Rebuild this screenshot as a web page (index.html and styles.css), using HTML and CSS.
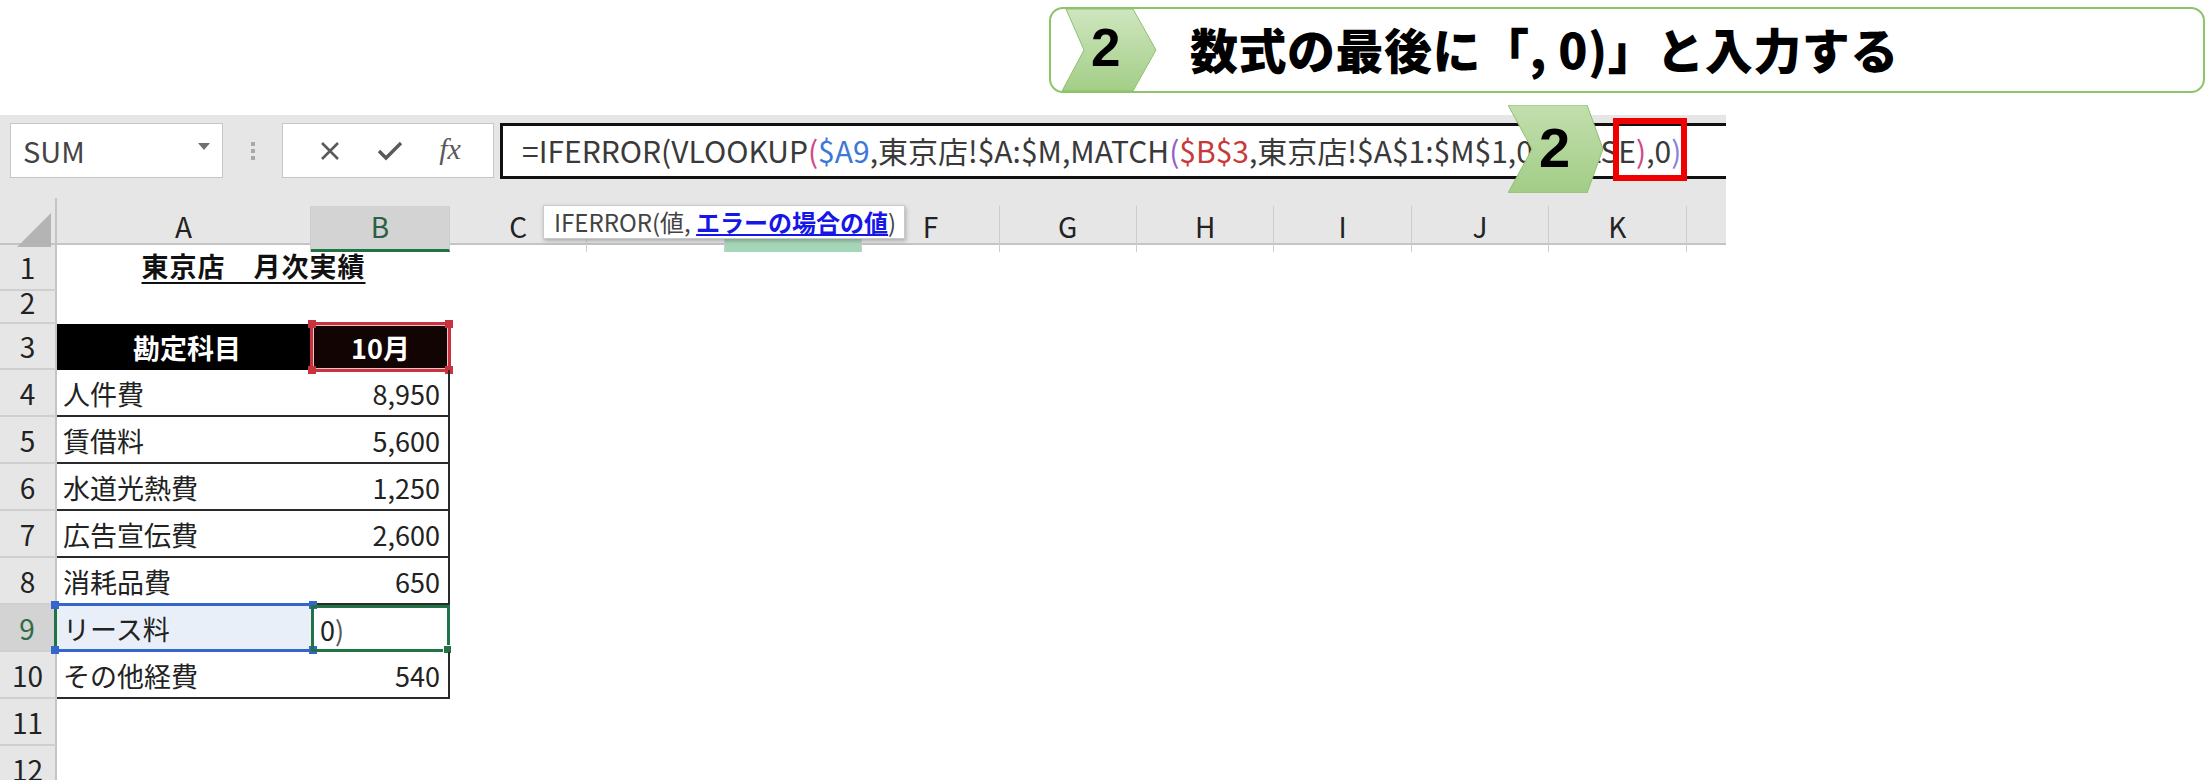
FILE: index.html
```html
<!DOCTYPE html>
<html lang="ja">
<head>
  <meta charset="UTF-8">
  <link rel="stylesheet" href="styles.css">
  <title>IFERROR 数式の入力</title>
</head>
<body>
  <div class="top">
    <div class="banner">
      <div class="step">
        <svg class="step-shape" width="96" height="82" viewBox="0 0 96 82">
          <defs>
            <linearGradient id="g1" x1="0" y1="0" x2="0" y2="1">
              <stop offset="0" stop-color="#cfe6bf"/>
              <stop offset="1" stop-color="#a3ce87"/>
            </linearGradient>
          </defs>
          <polygon points="4,0 71,0 94,41 71,82 0,82 22,41" fill="url(#g1)" stroke="#8fc06e" stroke-width="1"/>
        </svg>
        <span class="step-num">2</span>
      </div>
      <div class="banner-text">数式の最後に「, 0)」と入力する</div>
    </div>
  </div>

  <div class="excel">
    <div class="fbar">
      <div class="namebox">
        <span>SUM</span>
        <svg width="12" height="8" viewBox="0 0 12 8"><polygon points="0,0 12,0 6,7" fill="#707070"/></svg>
      </div>
      <div class="grip"><i></i><i></i><i></i></div>
      <div class="btns">
        <svg width="22" height="22" viewBox="0 0 22 22"><path d="M3 3 L19 19 M19 3 L3 19" stroke="#5a5a5a" stroke-width="2.6" fill="none"/></svg>
        <svg width="26" height="22" viewBox="0 0 26 22"><path d="M2 11 L9 18 L24 3" stroke="#5a5a5a" stroke-width="3.4" fill="none"/></svg>
        <span class="fx">fx</span>
      </div>
      <div class="formula">
        <span class="f-text">=IFERROR(VLOOKUP<b class="c-pink">(</b><b class="c-blue">$A9</b>,東京店!$A:$M,MATCH<b class="c-purple">(</b><b class="c-red">$B$3</b>,東京店!$A$1:$M$1,0<b class="c-purple">)</b>,FALSE<b class="c-pink">)</b>,0<b class="c-lav">)</b></span>
        <div class="chev">
          <svg width="96" height="88" viewBox="0 0 96 88">
            <defs>
              <linearGradient id="g2" x1="0" y1="0" x2="0" y2="1">
                <stop offset="0" stop-color="#c2dfae"/>
                <stop offset="1" stop-color="#a2cd86"/>
              </linearGradient>
            </defs>
            <polygon points="0,0 79,0 95,44 79,88 0,88 24,44" fill="url(#g2)" stroke="#90bf70" stroke-width="1"/>
          </svg>
          <span>2</span>
        </div>
        <div class="redbox"></div>
      </div>
    </div>

    <div class="colheads">
      <div class="corner"><i></i></div>
      <div class="ch col-a">A</div>
      <div class="ch col-b sel">B</div>
      <div class="ch">C</div>
      <div class="ch">D</div>
      <div class="ch ref">E</div>
      <div class="ch">F</div>
      <div class="ch">G</div>
      <div class="ch">H</div>
      <div class="ch">I</div>
      <div class="ch">J</div>
      <div class="ch">K</div>
      <div class="ch last"></div>
      <div class="tip">IFERROR(値, <u>エラーの場合の値</u>)</div>
    </div>

    <div class="sheet">
      <div class="row r1">
        <div class="rh">1</div>
        <div class="title"><span>東京店　月次実績</span></div>
      </div>
      <div class="row r2">
        <div class="rh">2</div>
      </div>
      <div class="row r3">
        <div class="rh">3</div>
        <div class="cell a head">勘定科目</div>
        <div class="cell b head dark">10月
          <div class="refbox red"><i class="k tl"></i><i class="k tr"></i><i class="k bl"></i><i class="k br"></i></div>
        </div>
      </div>
      <div class="row tr">
        <div class="rh">4</div>
        <div class="cell a">人件費</div>
        <div class="cell b num">8,950</div>
      </div>
      <div class="row tr">
        <div class="rh">5</div>
        <div class="cell a">賃借料</div>
        <div class="cell b num">5,600</div>
      </div>
      <div class="row tr">
        <div class="rh">6</div>
        <div class="cell a">水道光熱費</div>
        <div class="cell b num">1,250</div>
      </div>
      <div class="row tr">
        <div class="rh">7</div>
        <div class="cell a">広告宣伝費</div>
        <div class="cell b num">2,600</div>
      </div>
      <div class="row tr">
        <div class="rh">8</div>
        <div class="cell a">消耗品費</div>
        <div class="cell b num">650</div>
      </div>
      <div class="row tr">
        <div class="rh sel">9</div>
        <div class="cell a picked">リース料
          <div class="refbox blue"><i class="k tl"></i><i class="k tr"></i><i class="k bl"></i><i class="k br"></i></div>
        </div>
        <div class="cell b active">0<span class="paren">)</span>
          <i class="handle"></i>
        </div>
      </div>
      <div class="row tr">
        <div class="rh">10</div>
        <div class="cell a">その他経費</div>
        <div class="cell b num">540</div>
      </div>
      <div class="row">
        <div class="rh">11</div>
      </div>
      <div class="row">
        <div class="rh">12</div>
      </div>
    </div>
  </div>
</body>
</html>
```

FILE: styles.css
```css
body {
  margin: 0;
  width: 2209px;
  height: 780px;
  overflow: hidden;
  background: #fff;
  font-family: "Noto Sans CJK JP", "Noto Sans", sans-serif;
}

/* step banner */
.top {
  height: 115px;
  display: flex;
  justify-content: flex-end;
  align-items: flex-start;
  padding: 7px 4px 0 0;
  box-sizing: border-box;
}
.banner {
  width: 1156px;
  height: 86px;
  box-sizing: border-box;
  border: 2px solid #8cc46a;
  border-radius: 14px;
  display: flex;
  align-items: center;
  padding-left: 11px;
}
.step {
  position: relative;
  width: 96px;
  height: 82px;
}
.step-shape {
  display: block;
}
.step-num {
  position: absolute;
  left: 29px;
  top: 9px;
  font-family: "Liberation Sans", sans-serif;
  font-weight: bold;
  font-size: 53px;
  line-height: 60px;
  color: #000;
}
.banner-text {
  margin-left: 32px;
  font-size: 48px;
  font-weight: 900;
  color: #000;
  letter-spacing: 0.5px;
  padding-bottom: 4px;
}

/* excel window */
.excel {
  width: 1726px;
  background: #e6e6e6;
}
.fbar {
  height: 83px;
  display: flex;
  align-items: flex-start;
  padding: 8px 0 0 10px;
  box-sizing: border-box;
}
.namebox {
  width: 213px;
  height: 55px;
  box-sizing: border-box;
  background: #fff;
  border: 1px solid #c6c6c6;
  display: flex;
  align-items: center;
  justify-content: space-between;
  padding: 0 12px 2px 12px;
  font-size: 29px;
  color: #444;
}
.namebox svg {
  margin-top: -6px;
}
.grip {
  width: 59px;
  height: 55px;
  display: flex;
  flex-direction: column;
  align-items: center;
  justify-content: center;
  gap: 3px;
}
.grip i {
  width: 4px;
  height: 4px;
  background: #a8a8a8;
}
.btns {
  width: 212px;
  height: 55px;
  box-sizing: border-box;
  background: #fff;
  border: 1px solid #c6c6c6;
  display: flex;
  align-items: center;
  justify-content: space-around;
  padding: 0 14px 0 18px;
}
.fx {
  font-family: "Liberation Serif", serif;
  font-style: italic;
  font-size: 30px;
  color: #5a5a5a;
  padding-bottom: 4px;
}
.formula {
  position: relative;
  margin-left: 6px;
  flex: 1;
  height: 56px;
  box-sizing: border-box;
  border: 3px solid #111;
  border-right: none;
  background: #fff;
  display: flex;
  align-items: center;
  padding-left: 19px;
  white-space: nowrap;
}
.f-text {
  font-size: 30px;
  color: #3a3a3a;
  padding-bottom: 3px;
}
.f-text b {
  font-weight: normal;
}
.c-pink { color: #d04a86; }
.c-blue { color: #3c78d6; }
.c-purple { color: #9061c8; }
.c-red { color: #c73a3a; }
.c-lav { color: #8a84d8; }

.chev {
  position: absolute;
  left: 1005px;
  top: -21px;
  width: 96px;
  height: 88px;
}
.chev svg {
  display: block;
}
.chev span {
  position: absolute;
  left: 31px;
  top: 11px;
  font-family: "Liberation Sans", sans-serif;
  font-weight: bold;
  font-size: 56px;
  line-height: 64px;
  color: #000;
}
.redbox {
  position: absolute;
  left: 1110px;
  top: -8px;
  width: 74px;
  height: 63px;
  box-sizing: border-box;
  border: 6px solid #f00000;
}

/* column headers */
.colheads {
  position: relative;
  display: grid;
  grid-template-columns: 57px 254px 139px repeat(9, 137.4px) 1fr;
  height: 45px;
  border-bottom: 2px solid #c4c4c4;
}
.corner {
  position: relative;
  border-right: 2px solid #c4c4c4;
}
.corner i {
  position: absolute;
  right: 4px;
  bottom: 5px;
  width: 0;
  height: 0;
  border-left: 34px solid transparent;
  border-bottom: 34px solid #b4b4b4;
}
.ch {
  display: flex;
  align-items: center;
  justify-content: center;
  font-size: 28px;
  color: #222;
  border-right: 1px solid #cdcdcd;
  margin-top: 8px;
  padding-bottom: 6px;
}
.ch.sel {
  background: #d3d3d3;
  color: #2e5e45;
  border-bottom: 3px solid #217346;
  padding-bottom: 3px;
}
.ch.ref {
  background: #a6d6b9;
}
.ch.last {
  border-right: none;
}
.tip {
  position: absolute;
  left: 543px;
  top: 7px;
  height: 34px;
  box-sizing: border-box;
  padding: 0 8px 0 10px;
  background: #fff;
  border: 1px solid #c9c9c9;
  box-shadow: 1px 2px 4px rgba(0, 0, 0, 0.25);
  font-size: 24px;
  line-height: 32px;
  color: #444;
  white-space: nowrap;
}
.tip u {
  color: #1616e8;
  font-weight: bold;
}

/* sheet rows */
.sheet {
  background: #fff;
}
.row {
  display: flex;
  height: 47px;
}
.r1 { height: 46px; }
.r2 { height: 33px; }
.r3 { height: 46px; }
.rh {
  width: 57px;
  flex: none;
  box-sizing: border-box;
  background: #e6e6e6;
  border-right: 2px solid #c4c4c4;
  border-bottom: 2px solid #cfcfcf;
  display: flex;
  align-items: flex-end;
  justify-content: center;
  overflow: hidden;
  font-size: 28px;
  line-height: 28px;
  padding-bottom: 8px;
  color: #222;
}
.r2 .rh {
  padding-bottom: 6px;
  line-height: 28px;
}
.rh.sel {
  background: #d3d3d3;
  color: #2e6b48;
  border-right: 3px solid #217346;
}
.title {
  width: 393px;
  display: flex;
  align-items: flex-end;
  justify-content: center;
  padding-bottom: 6px;
  box-sizing: border-box;
}
.title span {
  font-size: 27px;
  font-weight: bold;
  color: #111;
  text-decoration: underline;
  text-underline-offset: 5px;
  text-decoration-thickness: 2px;
  letter-spacing: 1px;
}
.cell {
  position: relative;
  box-sizing: border-box;
  display: flex;
  align-items: center;
  font-size: 27px;
  color: #222;
}
.cell.a {
  width: 254px;
  padding-left: 6px;
}
.cell.b {
  width: 139px;
}
.cell.head {
  background: #000;
  color: #fff;
  font-weight: bold;
  justify-content: center;
  font-size: 27px;
}
.cell.dark {
  background: #130404;
}
.row.tr .cell {
  border-bottom: 2px solid #2a2a2a;
  padding-top: 2px;
}
.row.tr .cell.b {
  border-right: 2px solid #2a2a2a;
}
.cell.num {
  justify-content: flex-end;
  padding-right: 8px;
}
.cell.picked {
  background: #e9eff9;
}
.cell.active {
  padding-left: 6px;
  border: 3px solid #217346 !important;
}
.paren {
  color: #555;
}
.handle {
  position: absolute;
  right: -5px;
  bottom: -5px;
  width: 7px;
  height: 7px;
  background: #217346;
  border: 1px solid #fff;
}

/* reference outlines */
.refbox {
  position: absolute;
  left: -1px;
  top: -2px;
  right: -1px;
  bottom: -2px;
  border: 3px solid;
  pointer-events: none;
}
.refbox.red {
  border-color: #c8333f;
  box-shadow: inset 0 0 0 1px #e9c3c3;
}
.refbox.blue {
  border-color: #3566cc;
  border-left: none;
  border-right: none;
}
.k {
  position: absolute;
  width: 8px;
  height: 8px;
}
.red .k { background: #c8333f; }
.blue .k { background: #3566cc; }
.k.tl { left: -5px; top: -5px; }
.k.tr { right: -5px; top: -5px; }
.k.bl { left: -5px; bottom: -5px; }
.k.br { right: -5px; bottom: -5px; }
```
